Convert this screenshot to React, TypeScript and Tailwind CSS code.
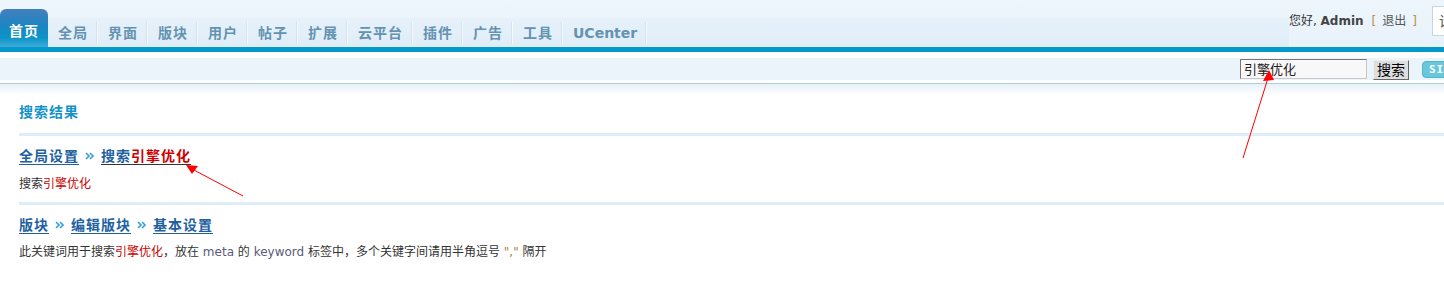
import React from "react";

const tabs = ["全局", "界面", "版块", "用户", "帖子", "扩展", "云平台", "插件", "广告", "工具", "UCenter"];

function Chevron() {
  return (
    <svg width="10" height="8" viewBox="0 0 10 8" className="inline-block mx-[6px] align-middle">
      <path d="M1 1 L4 4 L1 7 M5 1 L8 4 L5 7" stroke="#3aa0dc" strokeWidth="1.7" fill="none" />
    </svg>
  );
}

export default function App() {
  return (
    <div className="relative w-[1444px] h-[302px] overflow-hidden bg-white font-['DejaVu_Sans','Noto_Sans_CJK_SC',sans-serif] text-[#333]">
      {/* header */}
      <div className="flex h-[47px] bg-gradient-to-b from-[#eef6fc] to-[#e8f2fb]">
        <div className="flex-1 self-end h-[29px] flex items-end bg-gradient-to-b from-[#e6f1fa] to-[#e0edf8]">
          <div className="h-[38px] w-[48px] rounded-t-[6px] bg-[linear-gradient(to_bottom,#4380bd_0%,#1b86c2_45%,#0b93c9_75%,#3eaad8_100%)] flex items-center justify-center pt-[6px] text-white font-bold text-[14px] tracking-[1px] leading-none">
            首页
          </div>
          {tabs.map((t) => (
            <div key={t} className="flex items-center h-[29px]">
              <span
                className={
                  "pl-[10px] pr-[8px] text-[14px] font-bold leading-none text-[#6393b1] " +
                  (t === "UCenter" ? "tracking-[0px]" : "tracking-[1px]")
                }
              >
                {t}
              </span>
              <span className="w-px h-[22px] bg-[#d3e3f0]" />
              <span className="w-px h-[22px] bg-[#f4f9fd]" />
            </div>
          ))}
        </div>
        <div className="flex items-start pt-[6px] mr-[-60px]">
          <div className="flex items-center h-[30px] text-[12px] leading-none mr-[15px] pb-[1px]">
            <span>您好,&nbsp;</span>
            <span className="font-bold text-[#444]">Admin</span>
            <span className="text-[#b8903f] ml-[8px]">[</span>
            <span className="text-[#555] mx-[6px]">退出</span>
            <span className="text-[#b8903f]">]</span>
          </div>
          <div className="w-[72px] h-[30px] bg-white border border-[#c6d6e3] flex items-center pl-[6px] text-[14px] text-[#555]">
            设置
          </div>
        </div>
      </div>
      <div className="h-[5px] bg-[#0399cb]" />
      <div className="h-[6px] bg-white" />
      {/* search strip */}
      <div className="h-[22px] bg-[#ebf4fb] flex items-center justify-end">
        <div className="flex items-center mr-[-34px]">
          <div className="w-[127px] h-[20px] bg-[#f8f8f8] border border-t-[#777] border-l-[#777] border-r-[#c8c8c8] border-b-[#c8c8c8] flex items-center pl-[3px] text-[13px] leading-none text-[#222]">
            引擎优化
          </div>
          <div className="ml-[6px] w-[36px] h-[20px] mt-[2px] bg-[#dedede] border border-t-[#eee] border-l-[#eee] border-r-[#666] border-b-[#666] flex items-center justify-center text-[14px] leading-none text-black">
            搜索
          </div>
          <div className="ml-[13px] w-[56px] h-[17px] rounded-[4px] bg-[#68c7db] border border-[#4fb6cc] flex items-center pl-[6px] text-[11px] font-bold text-white tracking-[1px] leading-none font-['DejaVu_Sans_Mono',monospace]">
            SITEMAP
          </div>
        </div>
      </div>
      <div className="h-[3px] bg-white" />
      <div className="h-[1px] bg-[#aed0dc]" />
      <div className="h-[11px] bg-gradient-to-b from-[#e6f1f7] to-white" />

      {/* content */}
      <div className="pl-[19px]">
        <div className="pt-[7px] h-[27px] flex items-center text-[14px] font-bold tracking-[1px] text-[#1293cb] leading-none">
          搜索结果
        </div>
        <div className="mt-[11px] h-[3px] bg-[#deeef9]" />

        <div className="mt-[10px] h-[20px] flex items-center text-[14px] font-bold tracking-[1px] leading-none">
          <span className="text-[#225f9f] underline underline-offset-[3px]">全局设置</span>
          <Chevron />
          <span className="underline underline-offset-[3px]">
            <span className="text-[#225f9f]">搜索</span>
            <span className="text-[#cc0000]">引擎优化</span>
          </span>
        </div>
        <div className="mt-[10px] h-[16px] flex items-center text-[12px] leading-none">
          搜索<span className="text-[#cc0000]">引擎优化</span>
        </div>
        <div className="mt-[10px] h-[3px] bg-[#deeef9]" />

        <div className="mt-[10px] h-[20px] flex items-center text-[14px] font-bold tracking-[1px] leading-none">
          <span className="text-[#225f9f] underline underline-offset-[3px]">版块</span>
          <Chevron />
          <span className="text-[#225f9f] underline underline-offset-[3px]">编辑版块</span>
          <Chevron />
          <span className="text-[#225f9f] underline underline-offset-[3px]">基本设置</span>
        </div>
        <div className="mt-[9px] h-[16px] flex items-center text-[12px] leading-none whitespace-pre">
          <span>此关键词用于搜索</span>
          <span className="text-[#cc0000]">引擎优化</span>
          <span>，放在 </span>
          <span className="text-[#5a5a7a]">meta</span>
          <span> 的 </span>
          <span className="text-[#5a5a7a]">keyword</span>
          <span> 标签中，多个关键字间请用半角逗号 </span>
          <span className="text-[#b07a3a]">","</span>
          <span> 隔开</span>
        </div>
      </div>

      {/* annotation arrows */}
      <svg className="absolute left-0 top-0 pointer-events-none" width="1444" height="302">
        <line x1="243" y1="196" x2="192" y2="169" stroke="#ff0000" strokeWidth="1" />
        <polygon points="186,165 198,166 192,174" fill="#ff0000" />
        <line x1="1243" y1="158" x2="1268" y2="78" stroke="#ff0000" strokeWidth="1" />
        <polygon points="1269,70 1263,81 1274,80" fill="#ff0000" />
      </svg>
    </div>
  );
}
